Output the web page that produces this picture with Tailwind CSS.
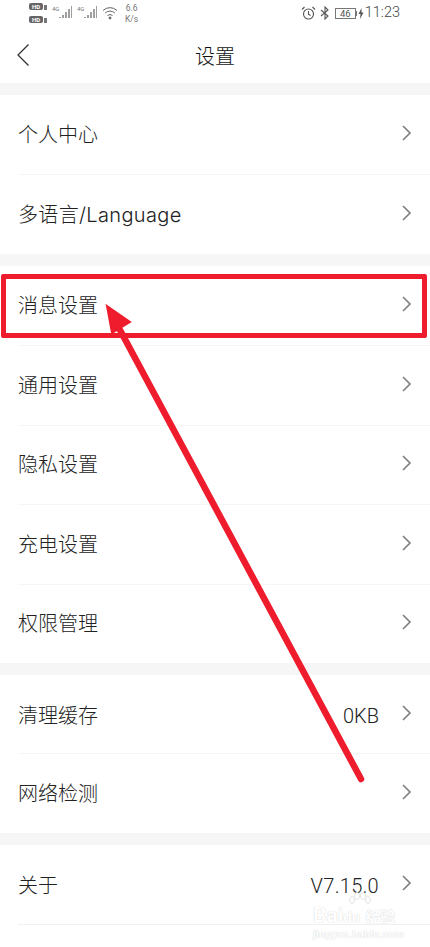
<!DOCTYPE html>
<html lang="zh-CN">
<head>
<meta charset="UTF-8">
<meta name="viewport" content="width=device-width, initial-scale=1.0">
<title>设置</title>
<script src="https://cdn.jsdelivr.net/npm/@tailwindcss/browser@4"></script>
</head>
<body class="bg-white overflow-hidden font-['Roboto','Noto_Sans_CJK_SC',sans-serif]">
<div class="relative w-[430px] h-[947px] overflow-hidden bg-white text-[#222]">

  <!-- Status bar -->
  <div class="h-[30px] flex justify-between text-[#666]">
    <div class="flex items-start pl-[29px] pt-[2px] gap-[5px]">
      <div class="flex flex-col gap-[6px] pt-[1px]">
        <div class="flex items-end gap-[1px]"><span class="w-[14px] h-[7px] rounded-[2px] bg-[#666] text-white text-[6px] leading-[7px] font-bold text-center">HD</span><span class="w-[3px] h-[5px] bg-[#777]"></span></div>
        <div class="flex items-end gap-[1px]"><span class="w-[14px] h-[7px] rounded-[2px] bg-[#666] text-white text-[6px] leading-[7px] font-bold text-center">HD</span><span class="w-[3px] h-[5px] bg-[#777]"></span></div>
      </div>
      <svg width="20" height="14" viewBox="0 0 20 14" class="mt-[3px]"><text x="0" y="6" font-size="6" fill="#777">4G</text><path d="M8 13v-1M11 13V10M14 13V7M17 13V4M20 13V1" stroke="#777" stroke-width="1.4"/></svg>
      <svg width="20" height="14" viewBox="0 0 20 14" class="mt-[3px]"><text x="0" y="6" font-size="6" fill="#777">4G</text><path d="M8 13v-1M11 13V10M14 13V7M17 13V4M20 13V1" stroke="#777" stroke-width="1.4"/></svg>
      <svg width="17" height="14" viewBox="0 0 17 14" fill="none" stroke="#666" class="mt-[4px]"><path d="M1 4.5a10 10 0 0 1 14 0M3.2 7a7 7 0 0 1 9.6 0M5.5 9.5a4 4 0 0 1 5 0"/><circle cx="8" cy="12" r="1" fill="#666"/></svg>
      <div class="text-[8.5px] leading-[11px] text-center text-[#777] ml-[1px] mt-[1px]">6.6<br>K/s</div>
    </div>
    <div class="flex items-center h-[26px] pr-[30px]">
      <svg width="15" height="15" viewBox="0 0 15 15" fill="none" stroke="#555" stroke-width="1.1"><circle cx="7.5" cy="8" r="5"/><path d="M7.5 5v3.2l2 1.3M1 3.5 3.5 1M14 3.5 11.5 1"/></svg>
      <svg width="10" height="14" viewBox="0 0 10 14" fill="none" stroke="#555" stroke-width="1.1" class="ml-[4px]"><path d="M1 4l7 6-3 3V1l3 3-7 6"/></svg>
      <div class="ml-[5px] w-[21px] h-[11px] border border-[#777] text-[9.5px] leading-[9px] text-center text-[#555]">46</div>
      <span class="w-[1px] h-[5px] bg-[#777]"></span>
      <svg width="6" height="11" viewBox="0 0 6 11" class="ml-[1px]"><path d="M3.6 0 .5 6h2L2 11l3.5-6.5h-2z" fill="#555"/></svg>
      <span class="ml-[1px] text-[14.5px] font-light text-[#444]">11:23</span>
    </div>
  </div>

  <!-- Header -->
  <div class="relative h-[53px] flex items-center justify-center">
    <svg width="12" height="22" viewBox="0 0 12 22" fill="none" stroke="#333" stroke-width="1.3" class="absolute left-[17px] top-[14px]"><path d="M11.5 .5 1 11l10.5 10.5"/></svg>
    <span class="text-[20px] font-light text-[#111] mt-[1px]">设置</span>
  </div>

  <!-- Settings list -->
  <div class="h-[12px] bg-[#f6f6f6]"></div>
  <div class="flex flex-col">
    <div class="h-[79px] pl-[18px] pr-[18px] flex items-center justify-between text-[20px] font-light"><span class="mt-[1px]">个人中心</span><svg class="-mt-[3px]" width="11" height="16" viewBox="0 0 11 16" fill="none" stroke="#7d7d7d" stroke-width="1.6"><path d="M2 1l7 7-7 7"/></svg></div>
    <div class="h-[80px] ml-[18px] pr-[18px] border-t border-[#f5f5f5] flex items-center justify-between text-[20px] font-light"><span class="font-['Inter','Noto_Sans_CJK_SC',sans-serif] tracking-[0.35px]">多语言/Language</span><svg class="-mt-[3px]" width="11" height="16" viewBox="0 0 11 16" fill="none" stroke="#7d7d7d" stroke-width="1.6"><path d="M2 1l7 7-7 7"/></svg></div>
  </div>
  <div class="h-[12px] bg-[#f6f6f6]"></div>
  <div class="flex flex-col">
    <div class="h-[79px] pl-[18px] pr-[18px] flex items-center justify-between text-[20px] font-light"><span class="mt-[1px]">消息设置</span><svg class="-mt-[3px]" width="11" height="16" viewBox="0 0 11 16" fill="none" stroke="#7d7d7d" stroke-width="1.6"><path d="M2 1l7 7-7 7"/></svg></div>
    <div class="h-[79.5px] ml-[18px] pr-[18px] border-t border-[#f5f5f5] flex items-center justify-between text-[20px] font-light"><span class="mt-[1px]">通用设置</span><svg class="-mt-[3px]" width="11" height="16" viewBox="0 0 11 16" fill="none" stroke="#7d7d7d" stroke-width="1.6"><path d="M2 1l7 7-7 7"/></svg></div>
    <div class="h-[79.5px] ml-[18px] pr-[18px] border-t border-[#f5f5f5] flex items-center justify-between text-[20px] font-light"><span class="mt-[1px]">隐私设置</span><svg class="-mt-[3px]" width="11" height="16" viewBox="0 0 11 16" fill="none" stroke="#7d7d7d" stroke-width="1.6"><path d="M2 1l7 7-7 7"/></svg></div>
    <div class="h-[79.5px] ml-[18px] pr-[18px] border-t border-[#f5f5f5] flex items-center justify-between text-[20px] font-light"><span class="mt-[1px]">充电设置</span><svg class="-mt-[3px]" width="11" height="16" viewBox="0 0 11 16" fill="none" stroke="#7d7d7d" stroke-width="1.6"><path d="M2 1l7 7-7 7"/></svg></div>
    <div class="h-[79.5px] ml-[18px] pr-[18px] border-t border-[#f5f5f5] flex items-center justify-between text-[20px] font-light"><span class="mt-[1px]">权限管理</span><svg class="-mt-[3px]" width="11" height="16" viewBox="0 0 11 16" fill="none" stroke="#7d7d7d" stroke-width="1.6"><path d="M2 1l7 7-7 7"/></svg></div>
  </div>
  <div class="h-[12px] bg-[#f6f6f6]"></div>
  <div class="flex flex-col">
    <div class="h-[78px] pl-[18px] pr-[18px] flex items-center justify-between text-[20px] font-light"><span class="mt-[3px]">清理缓存</span><span class="flex items-center gap-[22px]"><span class="mt-[3px]">0KB</span><svg class="-mt-[3px]" width="11" height="16" viewBox="0 0 11 16" fill="none" stroke="#7d7d7d" stroke-width="1.6"><path d="M2 1l7 7-7 7"/></svg></span></div>
    <div class="h-[80px] ml-[18px] pr-[18px] border-t border-[#f5f5f5] flex items-center justify-between text-[20px] font-light"><span class="mt-[1px]">网络检测</span><svg class="-mt-[3px]" width="11" height="16" viewBox="0 0 11 16" fill="none" stroke="#7d7d7d" stroke-width="1.6"><path d="M2 1l7 7-7 7"/></svg></div>
  </div>
  <div class="h-[12px] bg-[#f6f6f6]"></div>
  <div class="flex flex-col">
    <div class="h-[79px] pl-[18px] pr-[18px] flex items-center justify-between text-[20px] font-light"><span class="mt-[2px]">关于</span><span class="flex items-center gap-[22px]"><span class="mt-[2px] tracking-[0.3px]">V7.15.0</span><svg class="-mt-[3px]" width="11" height="16" viewBox="0 0 11 16" fill="none" stroke="#7d7d7d" stroke-width="1.6"><path d="M2 1l7 7-7 7"/></svg></span></div>
    <div class="h-[24px] ml-[18px] border-t border-[#f0f0f0]"></div>
  </div>

  <!-- Red annotation: box and arrow -->
  <div class="absolute left-[1px] top-[274px] w-[426px] h-[64px] border-[5px] border-[#ee1c2c] rounded-[2px]"></div>
  <svg class="absolute left-0 top-0" width="430" height="947" viewBox="0 0 430 947" fill="none">
    <path d="M361 779 120 330" stroke="#ee1c2c" stroke-width="6.5" stroke-linecap="round"/>
    <path d="M107 306 130 322 112 333z" fill="#ee1c2c" stroke="#ee1c2c" stroke-width="2"/>
  </svg>

  <!-- Watermark -->
  <svg class="absolute left-[345px] top-[892px]" width="28" height="16" viewBox="0 0 28 16" fill="#fff" stroke="#e4e4e4"><ellipse cx="7" cy="8" rx="2.5" ry="3.5"/><ellipse cx="12" cy="4" rx="2.5" ry="3.5"/><ellipse cx="18" cy="4" rx="2.5" ry="3.5"/><ellipse cx="23" cy="8" rx="2.5" ry="3.5"/></svg>
  <div class="absolute left-[313px] top-[904px] text-white [text-shadow:0_0_1px_#c4c4c4]">
    <div class="text-[21px] leading-[22px] font-bold whitespace-nowrap">Bai<span class="text-[15px]">du</span> <span class="text-[15px]">经验</span></div>
    <div class="text-[11px] leading-[13px] font-bold whitespace-nowrap">jingyan.baidu.com</div>
  </div>
</div>
</body>
</html>
